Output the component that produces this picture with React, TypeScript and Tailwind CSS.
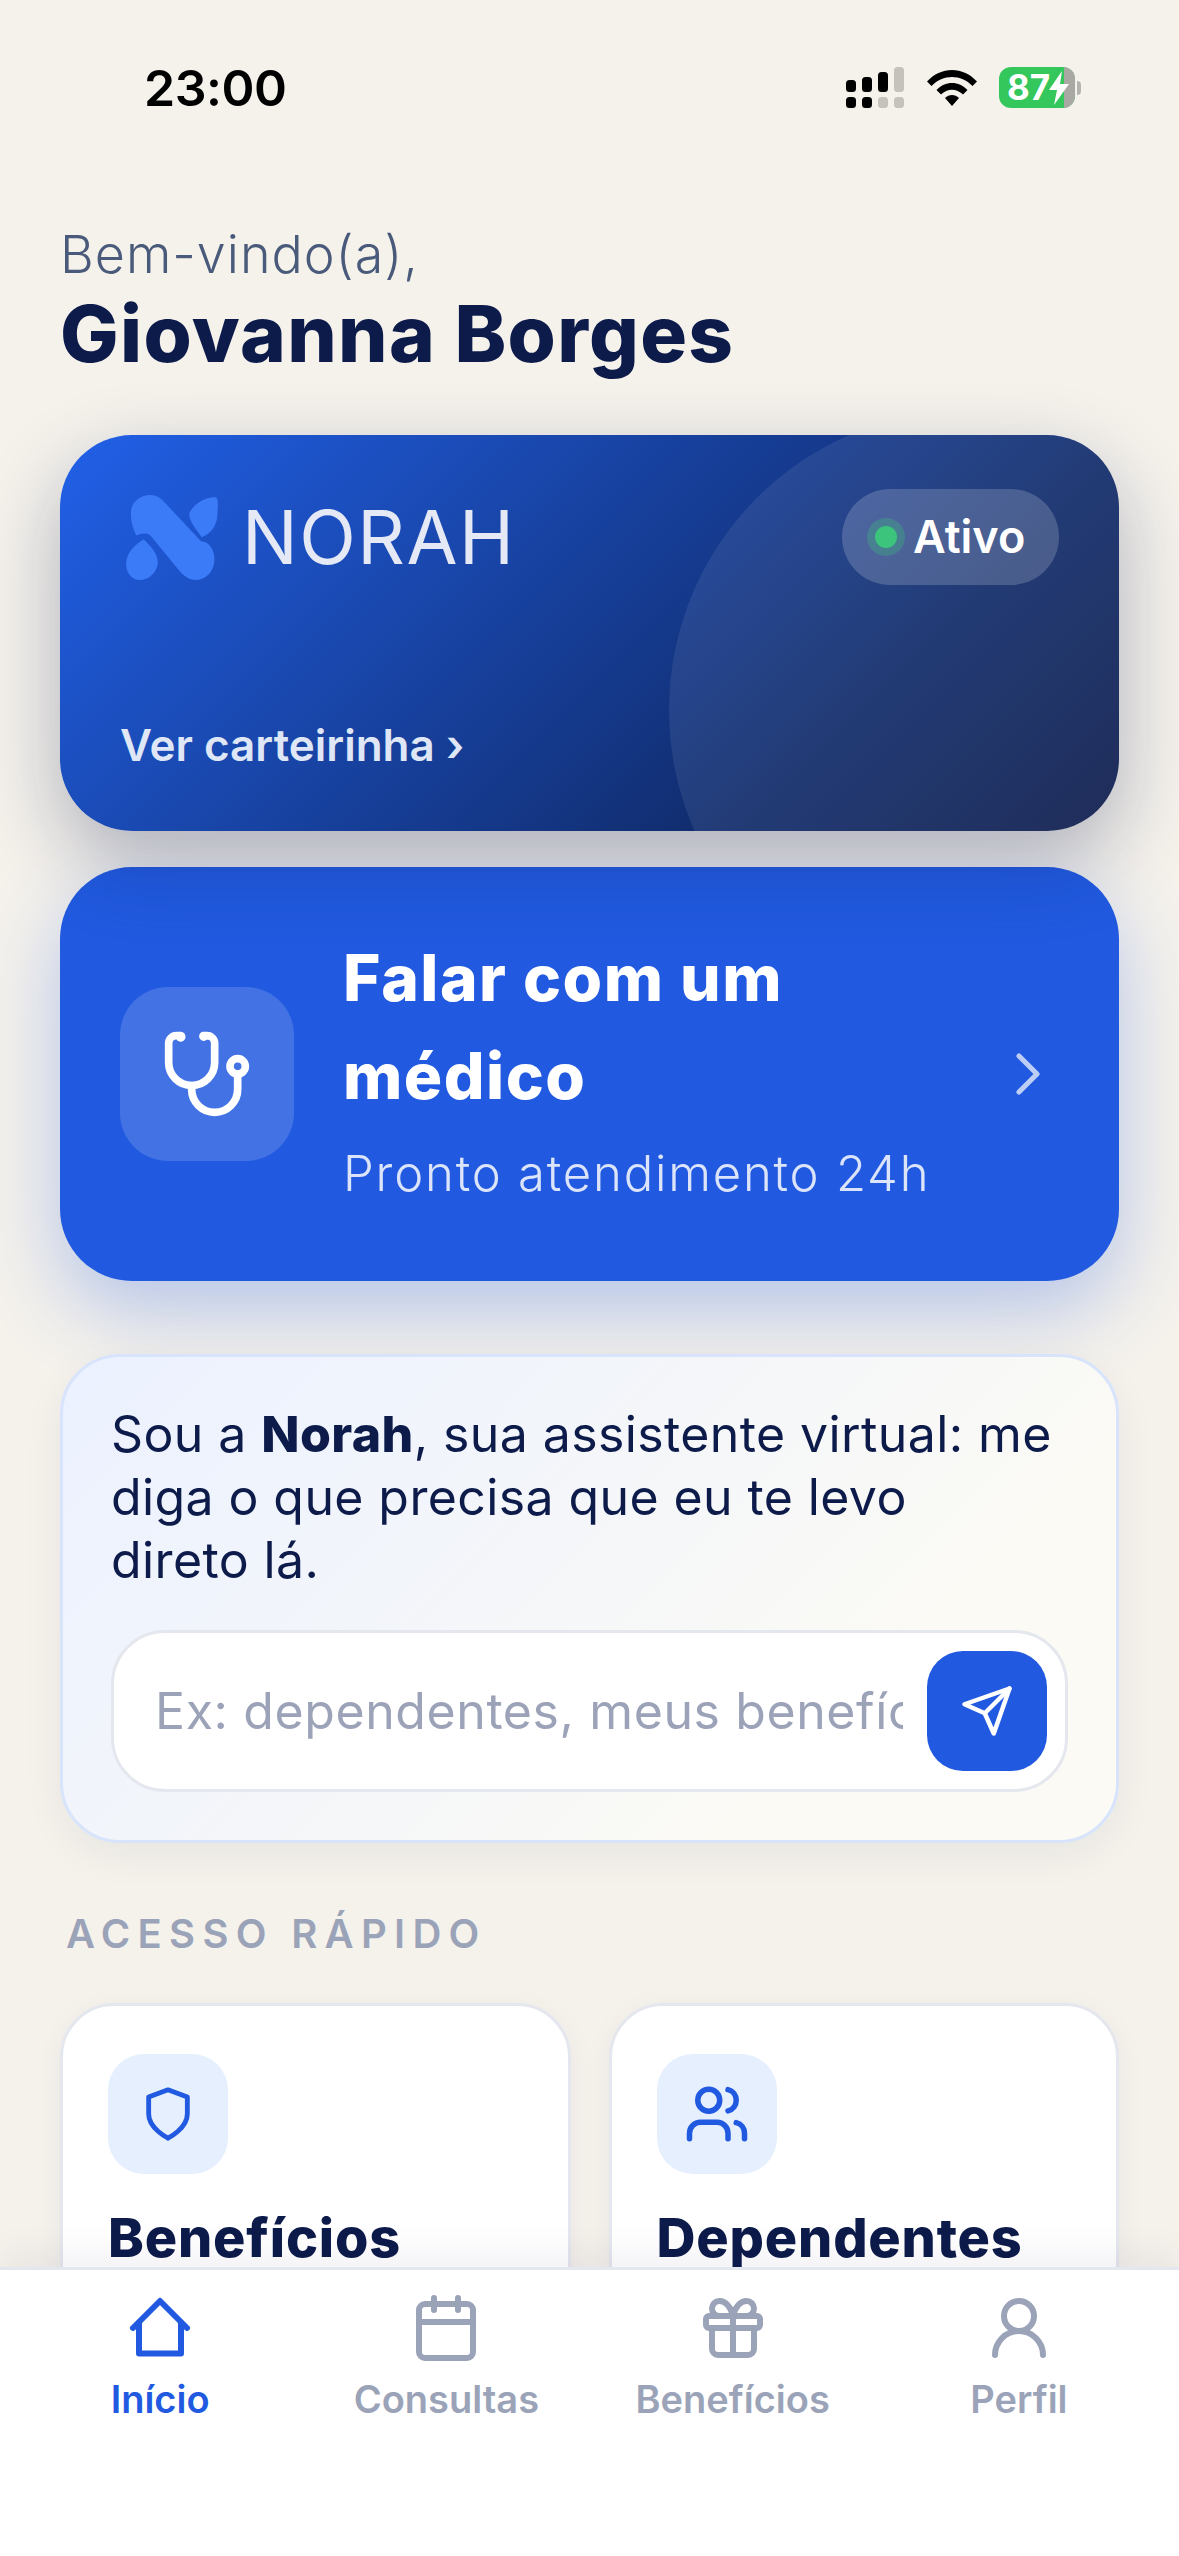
import { Calendar, ChevronRight, Gift, Users, UserRound } from "lucide-react";
import type { SVGProps } from "react";

type IconProps = SVGProps<SVGSVGElement> & { size?: number };

function LineIcon({ size = 24, strokeWidth = 2, children, ...rest }: IconProps) {
	return (
		<svg
			width={size}
			height={size}
			viewBox="0 0 24 24"
			fill="none"
			stroke="currentColor"
			strokeWidth={strokeWidth}
			strokeLinecap="round"
			strokeLinejoin="round"
			{...rest}
		>
			{children}
		</svg>
	);
}

// the lucide set has changed these since the reference was made, so they are drawn here
function HomeIcon(props: IconProps) {
	return (
		<LineIcon {...props}>
			<path d="M3 12 12 3l9 9" />
			<path d="M5 10.500V20.500H19V10.500" />
		</LineIcon>
	);
}

function ShieldIcon(props: IconProps) {
	return (
		<LineIcon {...props}>
			<path d="M12 22s8-4 8-10V5l-8-3-8 3v7c0 6 8 10 8 10" />
		</LineIcon>
	);
}

function StethoscopeIcon(props: IconProps) {
	return (
		<LineIcon {...props}>
			<path d="M4.800 2.300A.3.3 0 1 0 5 2H4a2 2 0 0 0-2 2v5a6 6 0 0 0 6 6v0a6 6 0 0 0 6-6V4a2 2 0 0 0-2-2h-1a.2.2 0 1 0 .3.3" />
			<path d="M8 15v1a6 6 0 0 0 6 6v0a6 6 0 0 0 6-6v-4" />
			<circle cx="20" cy="10" r="2" />
		</LineIcon>
	);
}

function SendIcon(props: IconProps) {
	return (
		<LineIcon {...props}>
			<path d="m22 2-7 20-4-9-9-4Z" />
			<path d="M22 2 11 13" />
		</LineIcon>
	);
}

const NAV_ITEMS = [
	{ label: "Início", icon: HomeIcon, active: true },
	{ label: "Consultas", icon: Calendar, active: false },
	{ label: "Benefícios", icon: Gift, active: false },
	{ label: "Perfil", icon: UserRound, active: false },
];

function StatusBar() {
	return (
		<div className="flex h-[174px] shrink-0 items-start justify-between pl-[144px] pr-[98px] pt-[58px]">
			<span className="text-[50px] font-semibold leading-[60px] tracking-[-0.5px] text-black">23:00</span>
			<div className="mt-[9px] flex items-center">
				<svg width="58" height="41" viewBox="0 0 58 41" className="text-black">
					<rect x="0" y="13" width="10" height="12" rx="3.5" fill="currentColor" />
					<rect x="16" y="10" width="10" height="15" rx="3.5" fill="currentColor" />
					<rect x="32" y="5" width="10" height="20" rx="3.5" fill="currentColor" />
					<rect x="48" y="0" width="10" height="25" rx="3.5" fill="#c5c2bc" />
					<rect x="0" y="30" width="10" height="11" rx="3.5" fill="currentColor" />
					<rect x="16" y="30" width="10" height="11" rx="3.5" fill="currentColor" />
					<rect x="32" y="30" width="10" height="11" rx="3.5" fill="#c5c2bc" />
					<rect x="48" y="30" width="10" height="11" rx="3.5" fill="#c5c2bc" />
				</svg>
				<svg width="50" height="38" viewBox="0 0 50 38" className="ml-[23px]">
					<path d="M0 12.5C13.5 -3 36.500 -3 50 12.500L45.500 17C34 5 16 5 4.500 17Z" fill="#000" />
					<path d="M9.500 21C18 11.500 32 11.500 40.500 21L36 25.500C29.500 19 20.500 19 14 25.500Z" fill="#000" />
					<path d="M18 29C22 25 28 25 32 29L25 37Z" fill="#000" />
				</svg>
				<div className="relative ml-[22px] flex h-[41px] w-[76px] items-center overflow-hidden rounded-[12px] bg-[#34c75c]">
					<span className="pl-[8px] text-[35px] font-bold leading-none text-white">87</span>
					<svg width="20" height="34" viewBox="0 0 20 34" className="relative z-10 -ml-px">
						<path d="M13 0L0 19H8L5 34L20 13H11Z" fill="#fff" />
					</svg>
					<div className="absolute inset-y-0 right-0 w-[11px] bg-[#aaa8a2]" />
				</div>
				<div className="ml-[2px] h-[14px] w-[4px] rounded-r-full bg-[#b5b3ad]" />
			</div>
		</div>
	);
}

function NorahLogo() {
	return (
		<svg width="92" height="85" viewBox="78 75 272 252" fill="#3b7bf8">
			<path d="M92 130C92 95 120 75 150 75C170 75 185 88 195 100L300 212C325 212 340 240 340 265C340 300 315 327 285 327C265 327 250 315 240 305L150 195C140 185 120 190 108 195C98 175 92 155 92 130Z" />
			<path d="M345 82C352 90 350 110 348 140C345 170 325 192 302 200C285 175 265 155 265 130C275 105 310 80 345 82Z" />
			<path d="M130 207C150 225 172 250 172 275C170 305 145 327 118 327C95 327 78 305 78 280C78 245 105 222 130 207Z" />
		</svg>
	);
}

function MemberCard() {
	return (
		<div className="relative flex h-[396px] flex-col justify-between overflow-hidden rounded-[72px] bg-[linear-gradient(135deg,#2160e8_0%,#102a68_75%,#0d1b4b_100%)] pb-[61px] shadow-[0_30px_80px_rgba(13,27,75,0.3)]">
			<div className="absolute -right-[150px] -top-[25px] size-[600px] rounded-full bg-white/8" />
			<div className="relative flex items-start justify-between pl-[66px] pr-[60px] pt-[54px]">
				<div className="flex items-center gap-[24px] pt-[6px]">
					<NorahLogo />
					<span className="text-[74px] font-normal leading-[85px] tracking-[1.5px] text-[#e4e9f5]">NORAH</span>
				</div>
				<div className="flex h-[96px] w-[217px] items-center rounded-full bg-white/18 pl-[33px]">
					<span className="size-[22px] rounded-full bg-[#3cc47c] shadow-[0_0_0_8px_rgba(60,196,124,0.3)]" />
					<span className="ml-[16px] text-[45px] font-semibold text-white">Ativo</span>
				</div>
			</div>
			<span className="relative pl-[60px] text-[44px] font-semibold leading-[50px] text-[#dfe6f5]">Ver carteirinha ›</span>
		</div>
	);
}

function DoctorCard() {
	return (
		<div className="mt-[36px] flex h-[414px] items-center rounded-[72px] bg-[#215ae0] pl-[60px] pr-[55px] shadow-[0_30px_80px_rgba(33,90,224,0.3)]">
			<div className="flex size-[174px] shrink-0 items-center justify-center rounded-[48px] bg-white/15">
				<StethoscopeIcon size={92} className="text-white" />
			</div>
			<div className="ml-[49px] flex-1 pb-[15px]">
				<p className="text-[64px] font-extrabold leading-[98px] tracking-[1.5px] text-white">
					Falar com um
					<br />
					médico
				</p>
				<p className="mt-[18px] text-[49px] font-light leading-[62px] tracking-[1.8px] text-[#dbe4fa]">Pronto atendimento 24h</p>
			</div>
			<ChevronRight size={72} strokeWidth={1.7} className="text-white/70" />
		</div>
	);
}

function AssistantCard() {
	return (
		<div className="mt-[73px] rounded-[60px] border-[3px] border-[#d7e4fb] bg-[linear-gradient(135deg,#ebf1ff,#fbfaf5_75%)] px-[48px] pb-[48px] pt-[46px] shadow-[0_12px_40px_rgba(13,27,75,0.06)]">
			<p className="text-[50px] leading-[63px] tracking-[0.4px] text-[#0d1b4b]">
				Sou a <b className="font-extrabold">Norah</b>, sua assistente virtual: me
				<br />
				diga o que precisa que eu te levo
				<br />
				direto lá.
			</p>
			<div className="mt-[38px] flex h-[162px] items-center rounded-[54px] border-[3px] border-[#e5e7ee] bg-white pl-[41px] pr-[18px]">
				<input
					readOnly
					placeholder="Ex: dependentes, meus benefícios"
					className="min-w-0 flex-1 bg-transparent text-[50px] tracking-[0.6px] outline-none placeholder:text-[#9ca3b9]"
				/>
				<button className="ml-[24px] flex size-[120px] shrink-0 items-center justify-center rounded-[36px] bg-[#215ae0]">
					<SendIcon size={54} className="text-white" />
				</button>
			</div>
		</div>
	);
}

function QuickCard({ title, icon, iconSize }: { title: string; icon: React.ElementType; iconSize: number }) {
	const Icon = icon;
	return (
		<div className="h-[320px] rounded-[54px] border-[3px] border-[#e5e7ee] bg-white pl-[45px] pt-[48px] shadow-[0_8px_30px_rgba(13,27,75,0.05)]">
			<div className="flex size-[120px] items-center justify-center rounded-[36px] bg-[#e5effe]">
				<Icon size={iconSize} strokeWidth={2} className="text-[#215ae0]" />
			</div>
			<p className="mt-[32px] text-[54px] font-extrabold leading-[64px] tracking-[0.8px] text-[#0d1b4b]">{title}</p>
		</div>
	);
}

export default function App() {
	return (
		<div className="flex h-[2556px] w-[1179px] flex-col overflow-hidden bg-[#f5f2ec] font-['Inter',sans-serif]">
			<StatusBar />
			<main className="min-h-0 flex-1 overflow-hidden px-[60px]">
				<p className="mt-[48px] text-[52px] font-light leading-[65px] tracking-[1px] text-[#4a5a7a]">Bem-vindo(a),</p>
				<h1 className="mb-[54px] text-[78px] font-extrabold leading-[94px] tracking-[1.3px] text-[#0d1b4b]">Giovanna Borges</h1>
				<MemberCard />
				<DoctorCard />
				<AssistantCard />
				<p className="mt-[66px] pl-[6px] text-[40px] font-semibold leading-[50px] tracking-[7.300px] text-[#9aa3b8]">ACESSO RÁPIDO</p>
				<div className="mt-[44px] grid grid-cols-2 gap-[38px]">
					<QuickCard title="Benefícios" icon={ShieldIcon} iconSize={58} />
					<QuickCard title="Dependentes" icon={Users} iconSize={66} />
				</div>
			</main>
			<nav className="relative z-10 flex h-[289px] shrink-0 items-start border-t-[3px] border-[#e5e7ee] bg-white px-[17px] pt-[22px] shadow-[0_-16px_32px_rgba(13,27,75,0.05)]">
				{NAV_ITEMS.map(({ label, icon: Icon, active }) => (
					<div key={label} className="flex flex-1 flex-col items-center">
						<Icon size={72} strokeWidth={2} className={active ? "text-[#215ae0]" : "text-[#9aa3b8]"} />
						<span className={`mt-[12px] text-[38px] font-semibold leading-[46px] ${active ? "text-[#215ae0]" : "text-[#9aa3b8]"}`}>{label}</span>
					</div>
				))}
			</nav>
		</div>
	);
}
